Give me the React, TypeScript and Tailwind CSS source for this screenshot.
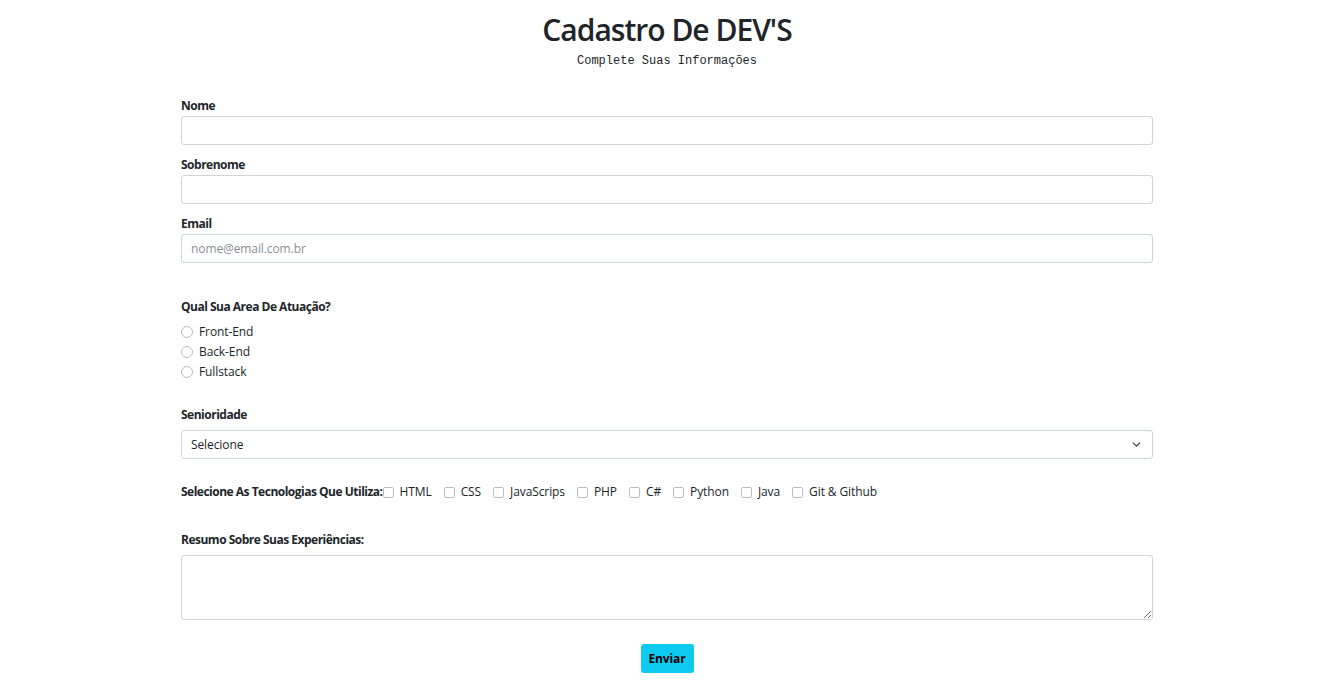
import React, { useState } from 'react';

const techs = ['HTML', 'CSS', 'JavaScrips', 'PHP', 'C#', 'Python', 'Java', 'Git & Github'];
const areas = ['Front-End', 'Back-End', 'Fullstack'];

const inputClass =
  'block w-full h-[29px] rounded-[3px] border border-[#ced4da] bg-white px-[9px] text-[12px] text-[#212529] outline-none placeholder:text-[#8a8f94]';

const labelClass = 'block text-[12px] leading-[18px] font-bold tracking-[-0.5px]';

export default function App() {
  const [area, setArea] = useState('');
  const [selected, setSelected] = useState<string[]>([]);

  const toggleTech = (t: string) => {
    setSelected((prev) => (prev.includes(t) ? prev.filter((x) => x !== t) : [...prev, t]));
  };

  return (
    <div className="min-h-screen bg-white text-[#212529] font-['Open_Sans',sans-serif]">
      {/* Header */}
      <div className="pt-3 text-center">
        <h1 className="text-[30px] leading-[36px] font-semibold tracking-[-1px]">Cadastro De DEV'S</h1>
        <p className="mt-[4px] text-[12px] leading-[18px] font-['Liberation_Mono',monospace]">
          Complete Suas Informações
        </p>
      </div>

      <form className="mx-auto mt-[27px] w-[972px] text-[12px] tracking-[-0.1px]" onSubmit={(e) => e.preventDefault()}>
        <label className={labelClass}>Nome</label>
        <input type="text" className={`${inputClass} mt-[1px]`} />

        <label className={`${labelClass} mt-[11px]`}>Sobrenome</label>
        <input type="text" className={`${inputClass} mt-[1px]`} />

        <label className={`${labelClass} mt-[11px]`}>Email</label>
        <input type="email" placeholder="nome@email.com.br" className={`${inputClass} mt-[1px]`} />

        {/* Area */}
        <p className={`${labelClass} mt-[35px]`}>Qual Sua Area De Atuação?</p>
        <div className="mt-[6px] flex flex-col gap-[1px]">
          {areas.map((a) => (
            <label key={a} className="flex h-[19px] items-center gap-[6px] leading-[18px]">
              <input
                type="radio"
                name="area"
                checked={area === a}
                onChange={() => setArea(a)}
                className="m-0 h-[12px] w-[12px] appearance-none rounded-full border border-[#b9bec3] bg-white checked:border-[#0d6efd] checked:bg-[#0d6efd]"
              />
              <span>{a}</span>
            </label>
          ))}
        </div>

        {/* Senioridade */}
        <label className={`${labelClass} mt-[25px]`}>Senioridade</label>
        <div className="relative mt-[6px]">
          <select className="block h-[29px] w-full appearance-none rounded-[3px] border border-[#ced4da] bg-white px-[9px] text-[12px] text-[#212529] outline-none">
            <option>Selecione</option>
            <option>Junior</option>
            <option>Pleno</option>
            <option>Senior</option>
          </select>
          <svg
            className="pointer-events-none absolute right-[12px] top-[10px] h-[9px] w-[9px] text-[#343a40]"
            viewBox="0 0 16 16"
            fill="none"
            stroke="currentColor"
            strokeWidth={2}
            strokeLinecap="round"
            strokeLinejoin="round"
          >
            <path d="M2 5l6 6 6-6" />
          </svg>
        </div>

        {/* Tecnologias */}
        <div className="mt-[24px] flex h-[18px] items-center">
          <span className="font-bold tracking-[-0.5px]">Selecione As Tecnologias Que Utiliza:</span>
          <div className="flex items-center gap-[12px]">
            {techs.map((t) => (
              <label key={t} className="flex items-center gap-[6px]">
                <input
                  type="checkbox"
                  checked={selected.includes(t)}
                  onChange={() => toggleTech(t)}
                  className="m-0 h-[11px] w-[11px] appearance-none rounded-[2px] border border-[#b9bec3] bg-white checked:border-[#0d6efd] checked:bg-[#0d6efd]"
                />
                <span>{t}</span>
              </label>
            ))}
          </div>
        </div>

        {/* Resumo */}
        <label className={`${labelClass} mt-[30px]`}>Resumo Sobre Suas Experiências:</label>
        <textarea className="mt-[6px] block h-[65px] w-full rounded-[3px] border border-[#ced4da] bg-white px-[9px] py-[5px] text-[12px] outline-none" />

        <div className="mt-[24px] flex justify-center">
          <button
            type="submit"
            className="h-[29px] w-[53px] rounded-[3px] bg-[#0dcaf0] text-[12px] font-bold text-black"
          >
            Enviar
          </button>
        </div>
      </form>
    </div>
  );
}
